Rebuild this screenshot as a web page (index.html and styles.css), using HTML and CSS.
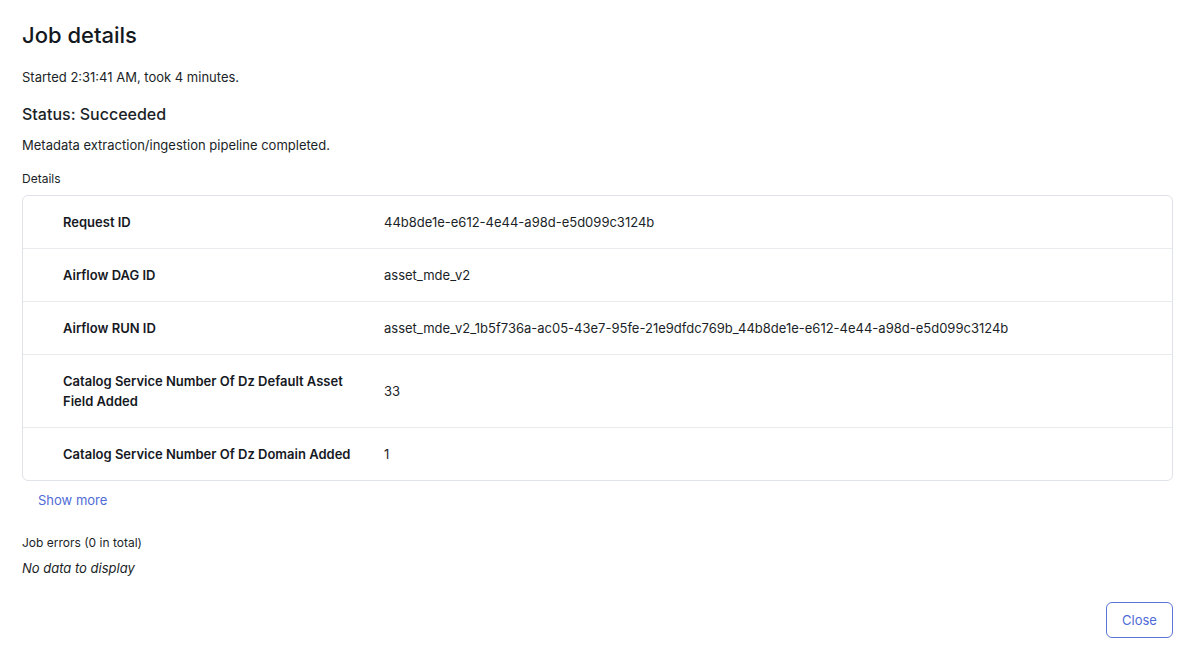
FILE: index.html
```html
<!DOCTYPE html>
<html>
<head>
<meta charset="utf-8">
<link rel="stylesheet" href="styles.css">
</head>
<body>
<div class="modal">
  <h1 class="title">Job details</h1>
  <p class="meta">Started 2:31:41 AM, took 4 minutes.</p>
  <h2 class="status">Status: Succeeded</h2>
  <p class="desc">Metadata extraction/ingestion pipeline completed.</p>
  <div class="section-label">Details</div>
  <div class="table">
    <div class="row">
      <div class="key">Request ID</div>
      <div class="val">44b8de1e-e612-4e44-a98d-e5d099c3124b</div>
    </div>
    <div class="row">
      <div class="key">Airflow DAG ID</div>
      <div class="val">asset_mde_v2</div>
    </div>
    <div class="row">
      <div class="key">Airflow RUN ID</div>
      <div class="val">asset_mde_v2_1b5f736a-ac05-43e7-95fe-21e9dfdc769b_44b8de1e-e612-4e44-a98d-e5d099c3124b</div>
    </div>
    <div class="row">
      <div class="key">Catalog Service Number Of Dz Default Asset Field Added</div>
      <div class="val">33</div>
    </div>
    <div class="row">
      <div class="key">Catalog Service Number Of Dz Domain Added</div>
      <div class="val">1</div>
    </div>
  </div>
  <a class="show-more" href="#">Show more</a>
  <div class="section-label errors">Job errors (0 in total)</div>
  <p class="empty">No data to display</p>
  <div class="footer">
    <button class="btn">Close</button>
  </div>
</div>
</body>
</html>
```

FILE: styles.css
```css
* { box-sizing: border-box; }
html, body {
  margin: 0;
  padding: 0;
  background: #ffffff;
}
body {
  font-family: Inter, "Noto Sans", "Liberation Sans", sans-serif;
  color: #16191f;
}
.modal {
  padding: 21px 19px 0 22px;
}
.title {
  margin: 0;
  font-size: 22px;
  line-height: 28px;
  font-weight: 500;
  color: #141821;
}
.meta {
  margin: 19px 0 0;
  font-size: 13px;
  line-height: 18px;
  color: #1b1f27;
}
.status {
  margin: 18px 0 0;
  font-size: 16px;
  line-height: 20px;
  font-weight: 500;
  color: #1b1f27;
}
.desc {
  margin: 12px 0 0;
  font-size: 13px;
  line-height: 18px;
  color: #1b1f27;
}
.section-label {
  margin-top: 17px;
  font-size: 12px;
  line-height: 16px;
  color: #1b1f27;
}
.table {
  margin-top: 8px;
  border: 1px solid #dfe2e6;
  border-radius: 6px;
}
.row {
  display: flex;
  align-items: center;
  padding: 16px 20px 16px 40px;
  border-top: 1px solid #e9ebee;
  font-size: 13px;
  line-height: 20px;
}
.row:first-child { border-top: none; }
.key {
  flex: 0 0 321px;
  padding-right: 30px;
  font-weight: 600;
  color: #16191f;
}
.val {
  color: #1b1f27;
}
.show-more {
  display: inline-block;
  margin: 10px 0 0 16px;
  font-size: 13px;
  line-height: 18px;
  color: #4f6bd6;
  text-decoration: none;
}
.errors {
  margin-top: 26px;
}
.empty {
  margin: 8px 0 0;
  font-size: 13px;
  line-height: 18px;
  font-style: italic;
  color: #1b1f27;
}
.footer {
  display: flex;
  justify-content: flex-end;
  margin-top: 25px;
}
.btn {
  width: 67px;
  height: 36px;
  border: 1px solid #5c74d6;
  border-radius: 6px;
  background: #ffffff;
  color: #4f6bd6;
  font-family: inherit;
  font-size: 13px;
  cursor: pointer;
}
```
